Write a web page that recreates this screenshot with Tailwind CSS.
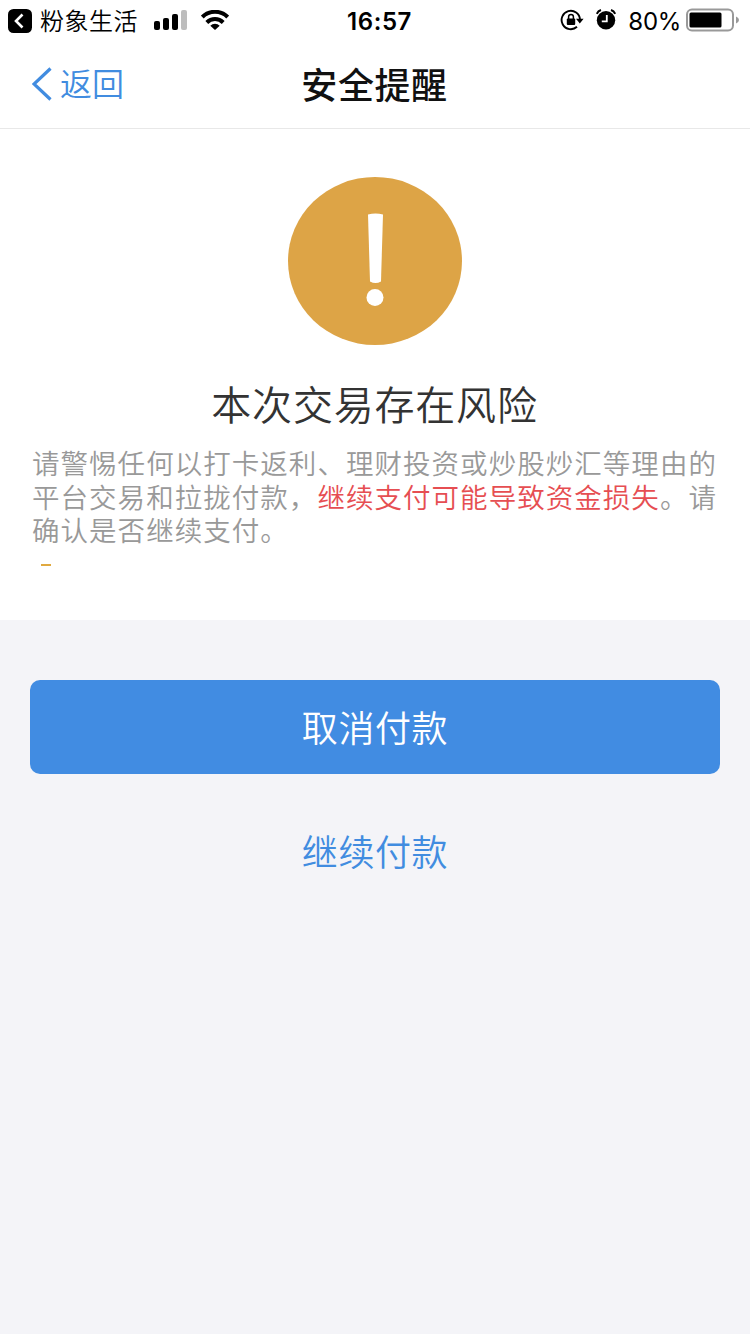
<!DOCTYPE html>
<html lang="zh-CN">
<head>
    <meta charset="UTF-8">
    <meta name="viewport" content="width=device-width, initial-scale=1.0">
    <title>安全提醒</title>
    <script src="https://cdn.jsdelivr.net/npm/@tailwindcss/browser@4"></script>
</head>
<body class="flex flex-col h-screen overflow-hidden bg-[#f4f4f8] font-['Inter','Noto_Sans_CJK_SC',sans-serif]">

    <!-- Status Bar -->
    <div class="grid grid-cols-[1fr_auto_1fr] items-center h-10 pl-2 pr-[11px] bg-white text-black">
        <div class="flex items-center">
            <svg class="w-6 h-6 mt-[2px]" viewBox="0 0 24 24">
                <rect width="24" height="24" rx="5.5" fill="#000"/>
                <path d="M14.500 5.500 8 12l6.500 6.500" fill="none" stroke="#fff" stroke-width="2.6"/>
            </svg>
            <span class="ml-2 pt-1 text-[24px] leading-9 tracking-[0.5px] font-[350]">粉象生活</span>
            <svg class="w-[34px] h-5 ml-4" viewBox="0 0 34 20">
                <rect x="0" y="11" width="6" height="9" rx="2"/>
                <rect x="9" y="8" width="6" height="12" rx="2"/>
                <rect x="18" y="4" width="6" height="16" rx="2"/>
                <rect x="27" y="0" width="6" height="20" rx="2" fill="#bdbdbd"/>
            </svg>
            <svg class="w-7 h-5 ml-[13px]" viewBox="0 0 28 20" fill="none" stroke="#000" stroke-width="4">
                <path d="M1.300 7a18 18 0 0 1 25.400 0"/>
                <path d="M5.800 12.500a11.600 11.600 0 0 1 16.400 0"/>
                <path d="M14 20l-4.700-4.200a6.600 6.600 0 0 1 9.400 0z" fill="#000" stroke="none"/>
            </svg>
        </div>
        <div class="pt-[3px] pl-3 text-[24px] leading-[37px] font-semibold tracking-[0.6px]">16:57</div>
        <div class="flex items-center justify-end">
            <!-- Rotation lock -->
            <svg class="w-6 h-[22px]" viewBox="0 0 24 22">
                <path d="M17 17.800A9.200 9.200 0 1 1 20 10.500" fill="none" stroke="#000" stroke-width="1.900"/>
                <path d="M16 9.800h7.600L19.800 14.600z"/>
                <rect x="6.800" y="9.600" width="8.400" height="6.400" rx="1"/>
                <path d="M8.600 10V7.800a2.400 2.400 0 0 1 4.800 0V10" fill="none" stroke="#000" stroke-width="1.500"/>
            </svg>
            <!-- Alarm -->
            <svg class="w-5 h-[22px] ml-3" viewBox="0 0 20 22">
                <circle cx="10" cy="11.300" r="9.200"/>
                <path d="M.8 4.800Q2 2 5 1M19.200 4.800Q18 2 15 1" fill="none" stroke="#000" stroke-width="2"/>
                <path d="M10.800 6v6.300H5.800" fill="none" stroke="#fff" stroke-width="1.800"/>
            </svg>
            <span class="ml-3 pt-[3px] text-[24px] leading-[37px] tracking-[-0.3px]">80%</span>
            <svg class="w-[53px] h-6 ml-[5px]" viewBox="0 0 53 24">
                <rect x="1" y="1.500" width="46" height="21" rx="5" fill="none" stroke="#999" stroke-width="2"/>
                <rect x="3.500" y="4.500" width="32" height="15" rx="1.500"/>
                <path d="M50 8.500q3 1.200 3 3.500t-3 3.500z" fill="#999"/>
            </svg>
        </div>
    </div>

    <!-- Navigation -->
    <div class="grid grid-cols-3 items-center h-[89px] px-8 bg-white border-b border-[#e8e8e8]">
        <a class="flex items-center text-[#418ce0]">
            <svg class="w-5 h-[34px]" viewBox="0 0 20 34">
                <path d="M18.500 1.500 2 17l16.500 15.500" fill="none" stroke="currentColor" stroke-width="3.200"/>
            </svg>
            <span class="ml-2 pt-[2px] text-[32px] leading-[42px] font-[350]">返回</span>
        </a>
        <h1 class="pt-1 -ml-[1px] text-center text-[36px] leading-[44px] tracking-[0.6px] font-medium text-[#111]">安全提醒</h1>
    </div>

    <!-- Warning -->
    <div class="h-[491px] px-8 pt-[47px] bg-white">
        <svg class="w-[176px] h-[170px] mx-auto" viewBox="0 0 176 170">
            <ellipse cx="88" cy="85" rx="87" ry="84" fill="#dda446"/>
            <path d="M81 38.500q7.500-2 15 0l-2 67q-5.500 3-11 0z" fill="#fff"/>
            <circle cx="88" cy="121.500" r="8.500" fill="#fff"/>
        </svg>
        <h2 class="mt-[30px] -ml-[1px] text-center text-[40px] leading-[60px] tracking-[0.8px] font-[350] text-[#333]">本次交易存在风险</h2>
        <p class="mt-[12px] -mr-2 text-[27.500px] leading-[33.500px] tracking-[1.040px] text-[#999] font-[350]">请警惕任何以打卡返利、理财投资或炒股炒汇等理由的<br>平台交易和拉拢付款，<span class="text-[#e64e52]">继续支付可能导致资金损失</span>。请<br>确认是否继续支付。</p>
        <div class="w-[10px] h-[2px] ml-[9px] mt-[15px] bg-[#e0a93f]"></div>
    </div>

    <!-- Action Buttons -->
    <div class="flex flex-col px-[30px] pt-[60px]">
        <button class="h-[94px] pt-1 rounded-[10px] bg-[#418ce2] text-white text-[36px] tracking-[0.6px] font-[350]">取消付款</button>
        <button class="h-[94px] pt-[2px] mt-[31px] text-[#418ce0] text-[36px] tracking-[0.6px] font-[350]">继续付款</button>
    </div>

</body>
</html>
